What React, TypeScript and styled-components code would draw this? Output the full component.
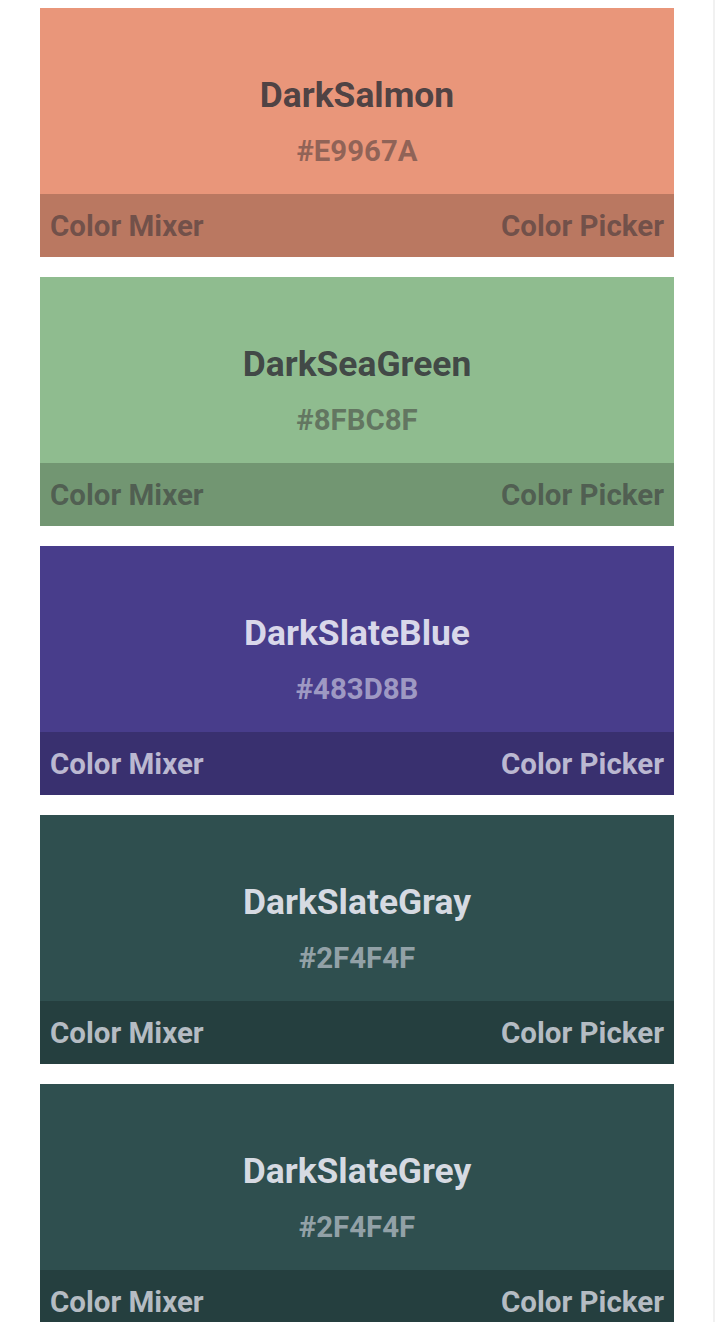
import React from "react";
import styled, { createGlobalStyle } from "styled-components";

const Global = createGlobalStyle`
  html, body { margin: 0; padding: 0; background: #ffffff; }
  body { font-family: Roboto, "Noto Sans", sans-serif; }
`;

type Tone = "light" | "dark";

interface Swatch {
  name: string;
  hex: string;
  tone: Tone;
}

const swatches: Swatch[] = [
  { name: "DarkSalmon", hex: "#E9967A", tone: "light" },
  { name: "DarkSeaGreen", hex: "#8FBC8F", tone: "light" },
  { name: "DarkSlateBlue", hex: "#483D8B", tone: "dark" },
  { name: "DarkSlateGray", hex: "#2F4F4F", tone: "dark" },
  { name: "DarkSlateGrey", hex: "#2F4F4F", tone: "dark" },
];

const Page = styled.div`
  width: 715px;
  min-height: 1322px;
  border-right: 2px solid #f1f1f1;
  display: flex;
  flex-direction: column;
  gap: 20px;
  padding: 8px 0 0 40px;
  box-sizing: border-box;
`;

const Card = styled.div<{ $bg: string }>`
  width: 634px;
  height: 249px;
  background: ${(p) => p.$bg};
  display: flex;
  flex-direction: column;
  flex-shrink: 0;
`;

const Face = styled.div`
  height: 186px;
  display: flex;
  flex-direction: column;
  align-items: center;
`;

const Title = styled.div<{ $tone: Tone }>`
  margin-top: 66px;
  font-size: 35.4px;
  line-height: 43px;
  font-weight: 700;
  color: ${(p) =>
    p.$tone === "light" ? "rgba(52, 52, 58, 0.87)" : "rgba(238, 238, 248, 0.88)"};
`;

const Hex = styled.div<{ $tone: Tone }>`
  margin-top: 16px;
  font-size: 29.4px;
  line-height: 36px;
  font-weight: 700;
  color: ${(p) =>
    p.$tone === "light" ? "rgba(55, 48, 52, 0.5)" : "rgba(235, 235, 245, 0.55)"};
`;

const Bar = styled.div<{ $tone: Tone }>`
  height: 63px;
  background: rgba(0, 0, 0, 0.2);
  display: flex;
  align-items: center;
  justify-content: space-between;
  padding: 0 10px;
  box-sizing: border-box;
  font-size: 29.5px;
  font-weight: 700;
  color: ${(p) =>
    p.$tone === "light" ? "rgba(52, 48, 54, 0.55)" : "rgba(238, 238, 248, 0.72)"};
`;

const Action = styled.span``;

export default function App() {
  return (
    <>
      <Global />
      <Page>
        {swatches.map((s) => (
          <Card key={s.name} $bg={s.hex}>
            <Face>
              <Title $tone={s.tone}>{s.name}</Title>
              <Hex $tone={s.tone}>{s.hex}</Hex>
            </Face>
            <Bar $tone={s.tone}>
              <Action>Color Mixer</Action>
              <Action>Color Picker</Action>
            </Bar>
          </Card>
        ))}
      </Page>
    </>
  );
}
